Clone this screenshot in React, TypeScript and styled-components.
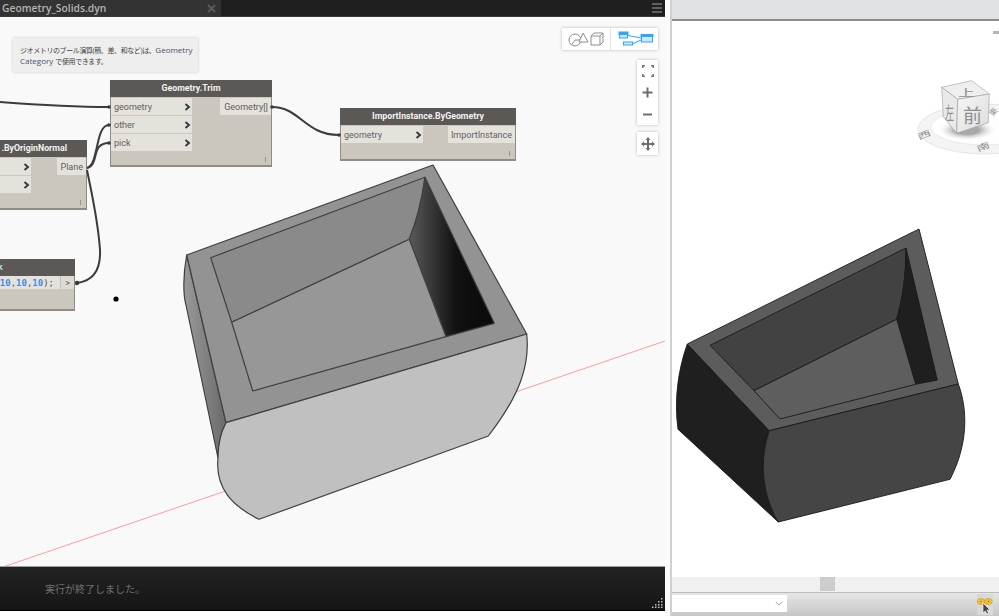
import React from 'react'
import styled, { createGlobalStyle } from 'styled-components'

const GlobalStyle = createGlobalStyle`
    html, body {
        margin: 0;
        padding: 0;
        background: #ffffff;
        overflow: hidden;
    }
    body {
        font-family: "Open Sans", "Liberation Sans", "Noto Sans CJK JP", sans-serif;
    }
`

type PortProps = { label: string; top: number; width: number }

const InputPort = ({ label, top, width }: PortProps) => (
    <InRow $top={top} $width={width}>
        <span>{label}</span>
        <Chevron viewBox="0 0 7 8"><path d="M1.5 1 L5 4 L1.5 7" /></Chevron>
    </InRow>
)

const OutputPort = ({ label, top, width }: PortProps) => (
    <OutRow $top={top} $width={width}>{label}</OutRow>
)

const Wires = () => (
    <Overlay viewBox="0 17 665 549">
        <WirePath d="M0 102 C40 105 70 107 109 107" />
        <WirePath d="M87 168 C99 165 95 125 109 125" />
        <WirePath d="M87 168 C100 165 90 143 109 143" />
        <WirePath d="M87 170 C92 195 98 220 100 250 C101 272 92 281 77 283" />
        <WirePath d="M272 107 C300 107 305 135 339 135" />
        <circle cx="109" cy="107" r="1.800" fill="#3a3a3a" />
        <circle cx="109" cy="125" r="1.800" fill="#3a3a3a" />
        <circle cx="109" cy="143" r="1.800" fill="#3a3a3a" />
        <circle cx="272" cy="107" r="1.800" fill="#3a3a3a" />
        <circle cx="339" cy="135" r="1.800" fill="#3a3a3a" />
        <circle cx="77" cy="283" r="2.200" fill="#3a3a3a" />
        <circle cx="116" cy="299" r="2.600" fill="#000" />
    </Overlay>
)

const LeftSolid = () => (
    <Overlay viewBox="0 17 665 549">
        <defs>
            <linearGradient id="wallShade" x1="0" y1="0" x2="1" y2="0">
                <stop offset="0" stopColor="#5a5a5a" />
                <stop offset="0.55" stopColor="#111" />
                <stop offset="1" stopColor="#0a0a0a" />
            </linearGradient>
            <linearGradient id="sideShade" x1="0" y1="0" x2="1" y2="0">
                <stop offset="0" stopColor="#9a9a9a" />
                <stop offset="1" stopColor="#6a6a6a" />
            </linearGradient>
        </defs>
        <line x1="0" y1="568" x2="665" y2="341" stroke="#ff9c9c" strokeWidth="1" />
        <g stroke="#404040" strokeWidth="1.200" strokeLinejoin="round">
            <path d="M186.7 255 C183 275 183 295 186 305 L218 458 C218 445 221 432 226 422.7 Z" fill="url(#sideShade)" />
            <path d="M186.7 255 L433 165 L526.7 334 L226 422.7 Z" fill="#939393" />
            <path d="M210.7 257.7 L425 177.3 C422 200 417 220 409.3 239.3 L231.7 322.3 Z" fill="#8a8a8a" />
            <path d="M425 177.3 L494.3 323.3 L446 336.7 L409.3 239.3 C417 220 422 200 425 177.3 Z" fill="url(#wallShade)" />
            <path d="M231.700 322.300 L409.300 239.300 L446 336.700 L252.700 391 Z" fill="#979797" />
            <path d="M226 422.7 L526.7 334 C530 365 520 395 488.3 436 L259 519.3 C232 506 215 488 218 458 C218 445 221 432 226 422.7 Z" fill="#c0c0c0" />
        </g>
    </Overlay>
)

const RightSolid = () => (
    <Overlay viewBox="672 21 327 556">
        <g stroke="#1a1a1a" strokeWidth="0.900" strokeLinejoin="round">
            <path d="M687.3 344 C678 370 674 400 678 429.3 L778.3 522 C762 495 759 460 769.3 430.7 Z" fill="#1f1f1f" />
            <path d="M687.3 344 L919 229 L958.3 384 L769.3 430.7 Z" fill="#5c5c5c" />
            <path d="M710 345.3 L906 248 C906 275 903 297 896.7 319.3 L754 390.7 Z" fill="#424242" />
            <path d="M906 248 L937.3 380 L915.7 384.3 L896.7 319.3 C903 297 906 275 906 248 Z" fill="#1f1f1f" />
            <path d="M754 390.7 L896.7 319.3 L915.7 384.3 L780 419 Z" fill="#5e5e5e" />
            <path d="M769.3 430.7 L958.3 384 C968 410 968 445 950 479.3 L778.3 522 C762 495 759 460 769.3 430.7 Z" fill="#454545" />
        </g>
    </Overlay>
)

const ViewCube = () => (
    <CubeSvg viewBox="0 0 82 80">
        <defs>
            <linearGradient id="cubeFront" x1="0" y1="0" x2="1" y2="1">
                <stop offset="0" stopColor="#f6f6f6" />
                <stop offset="1" stopColor="#dcdcdc" />
            </linearGradient>
            <radialGradient id="cubeShadow">
                <stop offset="0.4" stopColor="#a8a8a8" />
                <stop offset="1" stopColor="#ffffff" stopOpacity="0" />
            </radialGradient>
        </defs>
        <ellipse cx="67" cy="49" rx="66" ry="25" fill="#f4f4f4" stroke="#d6d6d6" strokeWidth="0.600" />
        <ellipse cx="67" cy="47" rx="53" ry="18" fill="#fff" stroke="#dcdcdc" strokeWidth="0.600" />
        <ellipse cx="50" cy="50" rx="30" ry="11" fill="url(#cubeShadow)" />
        <CubeLabel transform="translate(2 60) rotate(-22) scale(1.500 0.900)" fontSize="9">西</CubeLabel>
        <CubeLabel transform="translate(61 72) rotate(-22) scale(1.500 0.900)" fontSize="9">南</CubeLabel>
        <CubeLabel transform="translate(76 37) rotate(-50)" fontSize="8">東</CubeLabel>
        <g stroke="#9a9a9a" strokeWidth="0.600" strokeLinejoin="round">
            <path d="M24.700 7.300 L54.700 0.700 L72.300 14 L40.700 19.300 Z" fill="#efefef" />
            <path d="M24.700 7.300 L40.700 19.300 L39.700 53.300 L26.300 36.700 Z" fill="#e9e9e9" />
            <path d="M40.700 19.300 L72.300 14 L71.300 42.700 L39.700 53.300 Z" fill="url(#cubeFront)" />
        </g>
        <CubeLabel transform="translate(41 16) scale(1.200 0.650)" fontSize="14">上</CubeLabel>
        <CubeLabel transform="translate(28 40) scale(0.600 1.200)" fontSize="15">左</CubeLabel>
        <CubeLabel x="46" y="43" fontSize="19">前</CubeLabel>
    </CubeSvg>
)

export default function App() {
    return (
        <Page>
            <GlobalStyle />
            <LeftPane>
                <TabBar>
                    <Tab>
                        <TabTitle>Geometry_Solids.dyn</TabTitle>
                        <TabClose viewBox="0 0 9 9"><path d="M1 1 L8 8 M8 1 L1 8" /></TabClose>
                    </Tab>
                    <Hamburger><i /><i /><i /></Hamburger>
                </TabBar>
                <Canvas>
                    <LeftSolid />
                    <Note>
                        <Kana>ジオメトリのブール演算(積、差、和など)は、</Kana>Geometry<br />
                        Category <Kana>で使用できます。</Kana>
                    </Note>

                    <Node $x={110} $y={63} $w={162} $h={87}>
                        <NodeHeader>Geometry.Trim</NodeHeader>
                        <InputPort label="geometry" top={18} width={81} />
                        <InputPort label="other" top={36} width={81} />
                        <InputPort label="pick" top={54} width={81} />
                        <OutputPort label="Geometry[]" top={18} width={51} />
                        <Grip />
                    </Node>

                    <Node $x={-40} $y={123} $w={127} $h={70}>
                        <NodeHeader $align="right" $pad={20}>.ByOriginNormal</NodeHeader>
                        <InputPort label="" top={18} width={70} />
                        <InputPort label="" top={36} width={70} />
                        <OutputPort label="Plane" top={18} width={29} />
                        <Grip />
                    </Node>

                    <Node $x={340} $y={91} $w={176} $h={53}>
                        <NodeHeader>ImportInstance.ByGeometry</NodeHeader>
                        <InputPort label="geometry" top={18} width={82} />
                        <OutputPort label="ImportInstance" top={18} width={67} />
                        <Grip />
                    </Node>

                    <Node $x={-2} $y={242} $w={77} $h={52}>
                        <NodeHeader $align="left" $cyan>k</NodeHeader>
                        <CodeRow>
                            <CodeText><b>10</b>,<b>10</b>,<b>10</b>);</CodeText>
                            <CodeOut>&gt;</CodeOut>
                        </CodeRow>
                    </Node>

                    <Wires />

                    <ViewToggle>
                        <ToggleCell>
                            <svg width="36" height="16" viewBox="0 0 36 16" fill="none" stroke="#8c8c8c" strokeWidth="1">
                                <circle cx="7" cy="9" r="6" />
                                <path d="M7 9 L13 9 M7 9 L3.500 14" />
                                <path d="M11 11 L15 2 L20 11 Z" fill="#fff" />
                                <path d="M23 5 H32 V14 H23 Z M23 5 L26 2 H35 V11 L32 14 M32 5 L35 2" />
                            </svg>
                        </ToggleCell>
                        <ToggleCell>
                            <svg width="40" height="16" viewBox="0 0 40 16" fill="none" stroke="#2ea6ff" strokeWidth="1">
                                <rect x="5.500" y="1.500" width="8" height="5.500" fill="#cfe9fb" />
                                <rect x="5" y="1" width="9" height="2.500" fill="#2ea6ff" />
                                <rect x="9.500" y="11" width="9" height="3" fill="#cfe9fb" />
                                <rect x="27.500" y="4" width="11" height="7" fill="#cfe9fb" />
                                <rect x="27" y="3.500" width="12" height="2" fill="#2ea6ff" />
                                <path d="M14 4.500 L27 7 M19 12.500 L27 9" />
                            </svg>
                        </ToggleCell>
                    </ViewToggle>

                    <ZoomGroup>
                        <ZoomButton>
                            <svg width="12" height="12" viewBox="0 0 12 12" fill="none" stroke="#777" strokeWidth="1.600">
                                <path d="M0.800 3 V0.800 H3 M9 0.800 H11.200 V3 M11.200 9 V11.200 H9 M3 11.200 H0.800 V9" />
                            </svg>
                        </ZoomButton>
                        <ZoomButton>
                            <svg width="11" height="11" viewBox="0 0 11 11" stroke="#6e6e6e" strokeWidth="2"><path d="M0.500 5.500 H10.500 M5.500 0.500 V10.500" /></svg>
                        </ZoomButton>
                        <ZoomButton>
                            <svg width="11" height="11" viewBox="0 0 11 11" stroke="#6e6e6e" strokeWidth="2"><path d="M1 5.500 H10" /></svg>
                        </ZoomButton>
                    </ZoomGroup>
                    <PanButton>
                        <svg width="14" height="14" viewBox="0 0 14 14" fill="#6e6e6e">
                            <path d="M7 0 L9.500 3 H8 V6 H11 V4.500 L14 7 L11 9.500 V8 H8 V11 H9.500 L7 14 L4.500 11 H6 V8 H3 V9.500 L0 7 L3 4.500 V6 H6 V3 H4.500 Z" />
                        </svg>
                    </PanButton>
                </Canvas>
                <StatusBar>
                    <StatusText>実行が終了しました。</StatusText>
                    <ResizeGrip viewBox="0 0 11 11">
                        <path d="M9 1h1.500v1.500H9zM9 4h1.500v1.500H9zM6 4h1.500v1.500H6zM9 7h1.500v1.500H9zM6 7h1.500v1.500H6zM3 7h1.500v1.500H3zM9 9.500h1.500v1.500H9zM6 9.500h1.500v1.500H6zM3 9.500h1.500v1.500H3zM0 9.500h1.500v1.500H0z" fill="#bdbdbd" />
                    </ResizeGrip>
                </StatusBar>
                <BottomGap />
            </LeftPane>
            <Gutter />
            <RightPane>
                <RevitHeader />
                <RevitView>
                    <RightSolid />
                    <ViewCube />
                    <CornerTick />
                </RevitView>
                <ScrollTrack><ScrollThumb /></ScrollTrack>
                <RevitStatus>
                    <SelectBox>
                        <SelectArrow viewBox="0 0 10 6"><path d="M1 1 L5 5 L9 1" /></SelectArrow>
                    </SelectBox>
                    <SpacerBar />
                    <FilterBox>
                        <svg width="16" height="16" viewBox="0 0 16 16">
                            <ellipse cx="4" cy="3.500" rx="3.800" ry="3" fill="#f2c230" stroke="#b8901a" strokeWidth="0.500" />
                            <ellipse cx="11.500" cy="3.500" rx="3.800" ry="3" fill="#f2c230" stroke="#b8901a" strokeWidth="0.500" />
                            <circle cx="4" cy="3.500" r="0.700" fill="#9a7414" />
                            <circle cx="11.500" cy="3.500" r="0.700" fill="#9a7414" />
                            <path d="M6 5 L6 15 L8.300 13 L9.800 16 L11.500 15.200 L10 12.200 L13 12 Z" fill="#444" stroke="#fff" strokeWidth="0.600" />
                        </svg>
                    </FilterBox>
                </RevitStatus>
            </RightPane>
        </Page>
    )
}

const Page = styled.div`
    width: 999px;
    height: 616px;
    display: flex;
    overflow: hidden;
    background: #fff;
`

const LeftPane = styled.div`
    width: 665px;
    display: flex;
    flex-direction: column;
`

const TabBar = styled.div`
    height: 17px;
    display: flex;
    justify-content: space-between;
    background: #1f1f1f;
    border-bottom: 1px solid #3a3a3a;
    box-sizing: border-box;
`

const Tab = styled.div`
    width: 221px;
    background: #333333;
    display: flex;
    align-items: center;
    justify-content: space-between;
    padding: 0 4px 0 2px;
    box-sizing: border-box;
`

const TabTitle = styled.span`
    color: #b4b4b4;
    font-size: 10.300px;
    font-weight: 600;
`

const TabClose = styled.svg`
    width: 9px;
    height: 9px;
    margin-right: 1px;
    path {
        stroke: #5c5c5c;
        stroke-width: 1.8;
    }
`

const Hamburger = styled.div`
    width: 10px;
    margin: 3px 3px 0 0;
    display: flex;
    flex-direction: column;
    gap: 2px;
    i {
        height: 2px;
        background: #5e5e5e;
    }
`

const Canvas = styled.div`
    position: relative;
    height: 549px;
    background: #f9f9f9;
    overflow: hidden;
`

const Overlay = styled.svg`
    position: absolute;
    inset: 0;
    width: 100%;
    height: 100%;
`

const WirePath = styled.path`
    fill: none;
    stroke: #3c3c3c;
    stroke-width: 2;
`

const Note = styled.div`
    position: absolute;
    left: 13px;
    top: 21px;
    width: 185px;
    height: 34px;
    box-sizing: border-box;
    padding: 7px 0 0 7px;
    background: #eeeeee;
    box-shadow: 0 0 3px rgba(0, 0, 0, 0.2);
    color: #4a5068;
    font-size: 8px;
    line-height: 10px;
    white-space: nowrap;
`

const Kana = styled.span`
    font-size: 7px;
    letter-spacing: -0.400px;
    color: #444;
`

const Node = styled.div<{ $x: number; $y: number; $w: number; $h: number }>`
    position: absolute;
    left: ${p => p.$x}px;
    top: ${p => p.$y}px;
    width: ${p => p.$w}px;
    height: ${p => p.$h}px;
    box-sizing: border-box;
    background: #cbc6be;
    border: 1px solid #8f8c86;
    border-bottom-width: 2px;
    font-family: Roboto, "Liberation Sans", sans-serif;
`

const NodeHeader = styled.div<{ $align?: string; $cyan?: boolean; $pad?: number }>`
    height: 17px;
    margin: -1px -1px 0;
    background: #5b5855;
    color: ${p => (p.$cyan ? '#aee4f5' : '#f2f2f2')};
    font-size: 8.800px;
    font-weight: 700;
    line-height: 17px;
    text-align: ${p => p.$align || 'center'};
    padding-right: ${p => p.$pad || 0}px;
`

const InRow = styled.div<{ $top: number; $width: number }>`
    position: absolute;
    left: 0;
    top: ${p => p.$top - 1}px;
    width: ${p => p.$width}px;
    height: 17px;
    box-sizing: border-box;
    padding: 1px 1px 0 3px;
    background: #e5e2dc;
    color: #606060;
    font-size: 9px;
    line-height: 16px;
    display: flex;
    align-items: center;
    justify-content: space-between;
`

const Chevron = styled.svg`
    width: 7px;
    height: 8px;
    margin-left: auto;
    path {
        fill: none;
        stroke: #2f3b45;
        stroke-width: 1.9;
    }
`

const OutRow = styled.div<{ $top: number; $width: number }>`
    position: absolute;
    right: 0;
    top: ${p => p.$top - 1}px;
    width: ${p => p.$width}px;
    height: 17px;
    box-sizing: border-box;
    padding: 1px 3px 0 0;
    background: #e5e2dc;
    color: #606060;
    font-size: 9px;
    line-height: 17px;
    text-align: right;
`

const Grip = styled.div`
    position: absolute;
    right: 5px;
    bottom: 3px;
    width: 1px;
    height: 5px;
    background: #98948d;
`

const CodeRow = styled.div`
    height: 13px;
    display: flex;
    background: #e5e2dc;
`

const CodeText = styled.div`
    flex: 1;
    text-align: right;
    padding-right: 6px;
    font-family: "DejaVu Sans Mono", "Liberation Mono", monospace;
    font-size: 9px;
    line-height: 14px;
    color: #555;
    b {
        color: #3f8be8;
        font-weight: 700;
    }
`

const CodeOut = styled.div`
    width: 13px;
    background: #dedbd5;
    border-left: 1px solid #c6c2bb;
    color: #5a5a5a;
    font-size: 9px;
    line-height: 14px;
    text-align: center;
`

const ViewToggle = styled.div`
    position: absolute;
    left: 562px;
    top: 11px;
    width: 96px;
    height: 22px;
    display: flex;
    background: #fff;
    box-shadow: 0 0 3px rgba(0, 0, 0, 0.25);
`

const ToggleCell = styled.div`
    flex: 1;
    display: flex;
    align-items: center;
    justify-content: center;
    & + & {
        border-left: 1px solid #e2e2e2;
    }
`

const ZoomGroup = styled.div`
    position: absolute;
    left: 637px;
    top: 43px;
    width: 21px;
    height: 65px;
    display: flex;
    flex-direction: column;
    background: #fff;
    box-shadow: 0 0 3px rgba(0, 0, 0, 0.25);
`

const ZoomButton = styled.div`
    flex: 1;
    display: flex;
    align-items: center;
    justify-content: center;
`

const PanButton = styled.div`
    position: absolute;
    left: 637px;
    top: 115px;
    width: 21px;
    height: 23px;
    display: flex;
    align-items: center;
    justify-content: center;
    background: #fff;
    box-shadow: 0 0 3px rgba(0, 0, 0, 0.25);
`

const StatusBar = styled.div`
    position: relative;
    height: 45px;
    box-sizing: border-box;
    border-top: 1px solid #9c9c9c;
    border-bottom: 1px solid #000;
    background: linear-gradient(#232323, #151515);
    display: flex;
    align-items: center;
    padding-left: 45px;
`

const StatusText = styled.span`
    color: #717171;
    font-size: 10px;
`

const ResizeGrip = styled.svg`
    position: absolute;
    right: 2px;
    bottom: 2px;
    width: 11px;
    height: 11px;
`

const BottomGap = styled.div`
    flex: 1;
    background: #fff;
`

const Gutter = styled.div`
    width: 5px;
    background: #fbfbfb;
    border-right: 2px solid #d0d0d0;
`

const RightPane = styled.div`
    flex: 1;
    display: flex;
    flex-direction: column;
    min-width: 0;
`

const RevitHeader = styled.div`
    height: 19px;
    background: #e1e2e3;
    border-bottom: 2px solid #8c8c8c;
`

const RevitView = styled.div`
    position: relative;
    height: 556px;
    background: #fff;
    overflow: hidden;
`

const CubeSvg = styled.svg`
    position: absolute;
    right: 0;
    top: 59px;
    width: 82px;
    height: 80px;
`

const CubeLabel = styled.text`
    fill: #8e8e8e;
    font-family: "Noto Sans CJK JP", sans-serif;
`

const CornerTick = styled.div`
    position: absolute;
    right: 0;
    top: 10px;
    width: 6px;
    height: 3px;
    background: #b5b5b5;
`

const ScrollTrack = styled.div`
    height: 15px;
    background: #f0f0f0;
    padding-left: 148px;
`

const ScrollThumb = styled.div`
    width: 15px;
    height: 14px;
    background: #cdcdcd;
`

const RevitStatus = styled.div`
    flex: 1;
    display: flex;
    align-items: flex-start;
    padding-top: 2px;
    border-top: 1px solid #bbbbbb;
    background: linear-gradient(#e6e6e6, #c6c6c6);
`

const SelectBox = styled.div`
    width: 115px;
    height: 17px;
    background: #fff;
    display: flex;
    align-items: center;
    justify-content: flex-end;
    padding-right: 4px;
    box-sizing: border-box;
`

const SelectArrow = styled.svg`
    width: 8px;
    height: 5px;
    path {
        fill: none;
        stroke: #a0a0a0;
        stroke-width: 1.2;
    }
`

const SpacerBar = styled.div`
    flex: 1;
`

const FilterBox = styled.div`
    width: 16px;
    height: 21px;
    margin-top: -1px;
    margin-right: 6px;
    padding-top: 3px;
    box-sizing: border-box;
    background: #d9d9d9;
`
